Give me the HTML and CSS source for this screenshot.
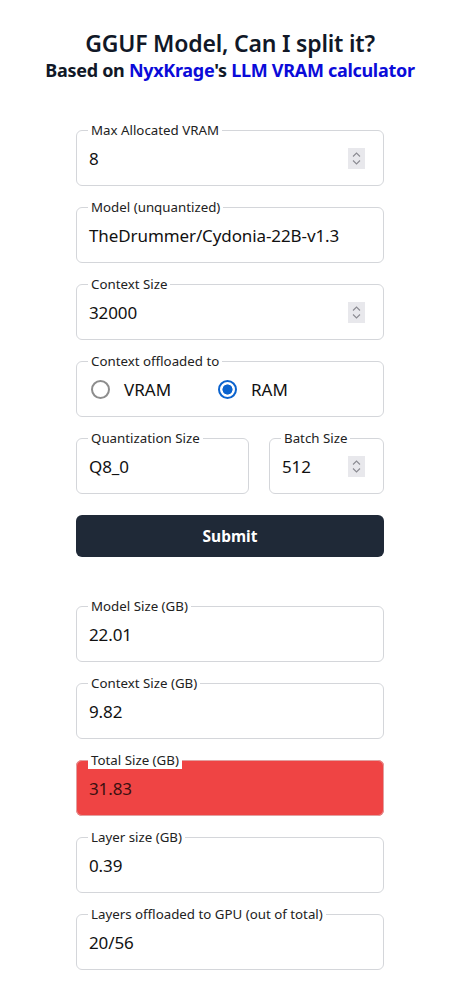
FILE: index.html
```html
<!DOCTYPE html>
<html>
<head>
<meta charset="utf-8">
<link rel="stylesheet" href="styles.css">
</head>
<body>
<main class="page">
  <header class="head">
    <h1 class="title">GGUF Model, Can I split it?</h1>
    <h2 class="subtitle">Based on <a href="#" class="link">NyxKrage</a>'s <a href="#" class="link">LLM VRAM calculator</a></h2>
  </header>

  <form class="form">
    <fieldset class="box">
      <legend class="lg">Max Allocated VRAM</legend>
      <div class="row"><span class="val">8</span><span class="spin"><svg width="17" height="21" viewBox="0 0 17 21"><rect width="17" height="21" fill="#e8e8ec"/><path d="M5 8.5 L8.5 5 L12 8.5 M5 12.5 L8.5 16 L12 12.5" fill="none" stroke="#8b8b92" stroke-width="1.1"/></svg></span></div>
    </fieldset>

    <fieldset class="box">
      <legend class="lg">Model (unquantized)</legend>
      <div class="row"><span class="val">TheDrummer/Cydonia-22B-v1.3</span></div>
    </fieldset>

    <fieldset class="box">
      <legend class="lg">Context Size</legend>
      <div class="row"><span class="val">32000</span><span class="spin"><svg width="17" height="21" viewBox="0 0 17 21"><rect width="17" height="21" fill="#e8e8ec"/><path d="M5 8.5 L8.5 5 L12 8.5 M5 12.5 L8.5 16 L12 12.5" fill="none" stroke="#8b8b92" stroke-width="1.1"/></svg></span></div>
    </fieldset>

    <fieldset class="box">
      <legend class="lg">Context offloaded to</legend>
      <div class="row radios">
        <label class="opt"><span class="radio"></span>VRAM</label>
        <label class="opt"><span class="radio on"></span>RAM</label>
      </div>
    </fieldset>

    <div class="pair">
      <fieldset class="box quant">
        <legend class="lg">Quantization Size</legend>
        <div class="row"><span class="val">Q8_0</span></div>
      </fieldset>
      <fieldset class="box batch">
        <legend class="lg">Batch Size</legend>
        <div class="row"><span class="val">512</span><span class="spin"><svg width="17" height="21" viewBox="0 0 17 21"><rect width="17" height="21" fill="#e8e8ec"/><path d="M5 8.5 L8.5 5 L12 8.5 M5 12.5 L8.5 16 L12 12.5" fill="none" stroke="#8b8b92" stroke-width="1.1"/></svg></span></div>
      </fieldset>
    </div>

    <button type="button" class="submit">Submit</button>
  </form>

  <section class="results">
    <fieldset class="box">
      <legend class="lg">Model Size (GB)</legend>
      <div class="row"><span class="val">22.01</span></div>
    </fieldset>
    <fieldset class="box">
      <legend class="lg">Context Size (GB)</legend>
      <div class="row"><span class="val">9.82</span></div>
    </fieldset>
    <fieldset class="box danger">
      <legend class="lg lg-white">Total Size (GB)</legend>
      <div class="row"><span class="val">31.83</span></div>
    </fieldset>
    <fieldset class="box">
      <legend class="lg">Layer size (GB)</legend>
      <div class="row"><span class="val">0.39</span></div>
    </fieldset>
    <fieldset class="box">
      <legend class="lg">Layers offloaded to GPU (out of total)</legend>
      <div class="row"><span class="val">20/56</span></div>
    </fieldset>
  </section>
</main>
</body>
</html>
```

FILE: styles.css
```css
* { box-sizing: border-box; }
html, body { margin: 0; padding: 0; background: #ffffff; }
body {
  font-family: "Noto Sans", "Open Sans", "Liberation Sans", sans-serif;
  color: #111827;
}
.page {
  width: 308px;
  margin: 0 0 0 calc(50% - 153px);
  padding-top: 28px;
}
.head { text-align: center; margin-left: -60px; margin-right: -60px; }
.title {
  margin: 0;
  font-size: 23px;
  line-height: 30px;
  font-weight: 600;
  color: #111827;
  letter-spacing: -0.2px;
}
.subtitle {
  margin: 0;
  font-size: 18px;
  line-height: 24px;
  font-weight: 700;
  color: #111827;
  letter-spacing: -0.3px;
}
.link { color: #0b0bd9; text-decoration: none; }

.form {
  margin-top: 39px;
  display: flex;
  flex-direction: column;
  gap: 12px;
}
.box {
  margin: 0;
  min-width: 0;
  border: 1px solid #d4d6da;
  border-radius: 6px;
  padding: 0 12px 9px;
}
.lg {
  padding: 0 3px;
  margin-left: -1px;
  font-size: 13.3px;
  line-height: 18px;
  color: #222;
}
.row {
  height: 37px;
  padding-top: 1px;
  display: flex;
  align-items: center;
  justify-content: space-between;
}
.val {
  font-size: 17px;
  color: #111;
  letter-spacing: -0.1px;
}
.spin { display: flex; margin-right: 6px; }

.radios { justify-content: flex-start; gap: 31px; padding-left: 2px; }
.opt {
  display: flex;
  align-items: center;
  gap: 14px;
  font-size: 17px;
  color: #111;
  width: 96px;
}
.radio {
  width: 19px;
  height: 19px;
  border-radius: 50%;
  border: 2px solid #8d8d8d;
  background: #fff;
}
.radio.on {
  border-color: #0b63ce;
  background: radial-gradient(circle, #0b63ce 0 4.8px, #fff 5.3px);
}

.pair { display: flex; gap: 20px; }
.quant { flex: 0 0 173px; }
.batch { flex: 1; }

.submit {
  margin-top: 9px;
  height: 42px;
  border: 0;
  border-radius: 6px;
  background: #1f2937;
  color: #fff;
  font-family: inherit;
  font-size: 15.5px;
  font-weight: 700;
}

.results {
  margin-top: 40px;
  display: flex;
  flex-direction: column;
  gap: 12px;
}
.danger { background: #ef4444; border-color: #e2a0a0; }
.danger .val { color: #3a1010; }
.lg-white { background: #fff; }
```
